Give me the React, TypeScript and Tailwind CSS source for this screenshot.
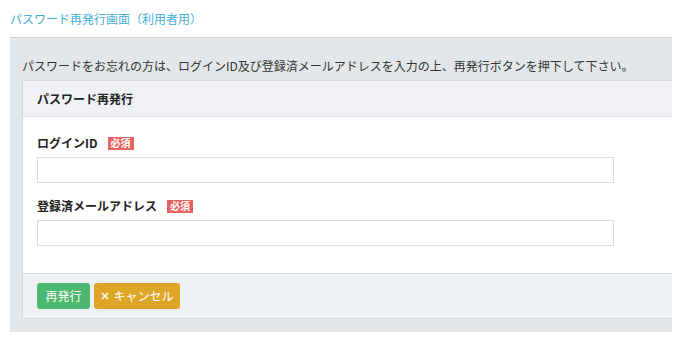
import { X } from "lucide-react";

const font = { fontFamily: '"Noto Sans CJK JP", "Noto Sans", sans-serif' };

function Required() {
  return (
    <span className="ml-[10px] inline-flex h-[13px] items-center bg-[#e8625f] px-[3px] text-[10px] font-bold leading-none text-white">
      必須
    </span>
  );
}

function Field({ label, first }: { label: string; first?: boolean }) {
  return (
    <div className={first ? "" : "mt-[15px]"}>
      <div className="flex h-[16px] items-center">
        <span className="text-[12px] font-bold leading-[16px] text-[#222]">{label}</span>
        <Required />
      </div>
      <input
        type="text"
        className="mt-[6px] block h-[26px] w-[577px] border border-[#dcdcdc] bg-white px-2 text-[12px] outline-none"
      />
    </div>
  );
}

export default function App() {
  return (
    <div className="min-h-[340px] bg-white text-[#333]" style={font}>
      <div className="flex h-[37px] items-center px-[10px] text-[12px] text-[#45aed6]">
        パスワード再発行画面（利用者用）
      </div>
      <div className="mx-[10px] border-t border-[#cdd3d8] bg-[#e4e7ea] pb-[13px] pl-[12px] pt-[19px]">
        <p className="mb-[5px] h-[18px] text-[12px] leading-[18px] text-[#333]">
          パスワードをお忘れの方は、ログインID及び登録済メールアドレスを入力の上、再発行ボタンを押下して下さい。
        </p>
        <div className="border border-r-0 border-[#d6dadf] bg-white">
          <div className="flex h-[36px] items-center border-b border-[#dfe3e7] bg-[#eff1f4] px-[14px] text-[12px] font-bold text-[#222]">
            パスワード再発行
          </div>
          <div className="px-[14px] pb-[27px] pt-[18px]">
            <Field label="ログインID" first />
            <Field label="登録済メールアドレス" />
          </div>
          <div className="flex h-[45px] items-center gap-[4px] border-t border-[#d6dadf] bg-[#eef1f4] px-[14px]">
            <button className="h-[26px] w-[53px] rounded-[3px] bg-[#4cb86d] text-[12px] text-white">
              再発行
            </button>
            <button className="flex h-[26px] w-[86px] items-center justify-center gap-[3px] rounded-[3px] bg-[#dea626] text-[12px] text-white">
              <X size={10} strokeWidth={4} />
              キャンセル
            </button>
          </div>
        </div>
      </div>
    </div>
  );
}
